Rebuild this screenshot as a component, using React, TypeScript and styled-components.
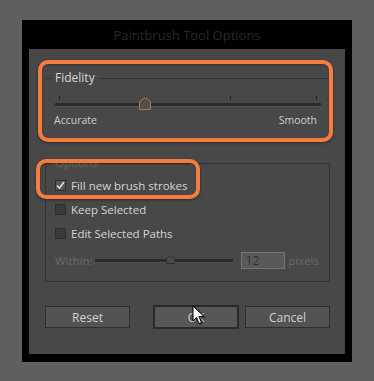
import React from "react";
import styled, { createGlobalStyle } from "styled-components";

const GlobalStyle = createGlobalStyle`
  html, body {
    margin: 0;
    padding: 0;
    background: #5f5f5f;
  }
  body {
    font-family: "Open Sans", "Liberation Sans", sans-serif;
  }
`;

const Page = styled.div`
  width: 374px;
  height: 381px;
  padding: 20px 0 0 22px;
  box-sizing: border-box;
`;

const Dialog = styled.div`
  width: 330px;
  background: #000;
  display: flex;
  flex-direction: column;
  padding-bottom: 8px;
`;

const TitleBar = styled.div`
  height: 29px;
  display: flex;
  align-items: center;
  justify-content: center;
  color: #282828;
  font-size: 13px;
`;

const Panel = styled.div`
  position: relative;
  margin: 0 7px;
  height: 305px;
  box-sizing: border-box;
  background: #484848;
  padding: 21px 15px 0 16px;
  display: flex;
  flex-direction: column;
`;

const Group = styled.fieldset<{ $boxed?: boolean }>`
  margin: 0;
  padding: 0 10px 0 9px;
  border: 1px solid ${(p) => (p.$boxed ? "#343434" : "transparent")};
  border-top-color: #343434;
  min-width: 0;
`;

const Legend = styled.legend<{ $dim?: boolean }>`
  margin-left: -3px;
  padding: 0 3px;
  font-size: ${(p) => (p.$dim ? "11.5px" : "12px")};
  line-height: ${(p) => (p.$dim ? "14px" : "16px")};
  color: ${(p) => (p.$dim ? "#686868" : "#d6d6d6")};
`;

const SliderBox = styled.div<{ $width: number }>`
  position: relative;
  width: ${(p) => p.$width}px;
  height: 14px;
  flex-shrink: 0;
`;

const Ticks = styled.div`
  display: flex;
  justify-content: space-between;
  padding: 0 4px;
  height: 4px;
`;

const Tick = styled.span`
  width: 1px;
  height: 4px;
  background: #232323;
`;

const Track = styled.div<{ $top: number }>`
  margin-top: ${(p) => p.$top}px;
  height: 3px;
  background: #2b2b2b;
  border-bottom: 1px solid #555;
`;

const Thumb = styled.svg`
  position: absolute;
  display: block;
`;

const Scale = styled.div`
  display: flex;
  justify-content: space-between;
  margin: 3px 2px 0 -1px;
  font-size: 10.5px;
  line-height: 14px;
  color: #cfcfcf;
`;

const Spacer = styled.div<{ $h: number }>`
  height: ${(p) => p.$h}px;
  flex-shrink: 0;
`;

const Rows = styled.div`
  padding: 3px 0 8px;
  display: flex;
  flex-direction: column;
`;

const Row = styled.label`
  display: flex;
  align-items: center;
  gap: 5px;
  height: 24px;
  font-size: 11.5px;
  color: #d4d4d4;
`;

const Box = styled.span<{ $checked?: boolean }>`
  width: 11px;
  height: 11px;
  box-sizing: border-box;
  background: ${(p) => (p.$checked ? "#555" : "#3a3a3a")};
  border: 1px solid #2c2c2c;
  display: flex;
  align-items: center;
  justify-content: center;
`;

const WithinRow = styled.div`
  display: flex;
  align-items: center;
  height: 26px;
  margin-top: 2px;
  font-size: 11.5px;
  color: #696969;
`;

const WithinLabel = styled.span`
  width: 41px;
`;

const NumberBox = styled.div`
  width: 46px;
  height: 17px;
  box-sizing: border-box;
  margin: 0 3px 0 8px;
  background: #595959;
  border: 1px solid #747474;
  color: #333;
  font-size: 12px;
  line-height: 15px;
  padding-left: 4px;
`;

const Buttons = styled.div`
  display: flex;
  justify-content: space-between;
  align-items: center;
  margin-top: 23px;
`;

const ButtonGroup = styled.div`
  display: flex;
  align-items: center;
  gap: 6px;
`;

const Button = styled.div<{ $focused?: boolean }>`
  width: ${(p) => (p.$focused ? 86 : 85)}px;
  height: ${(p) => (p.$focused ? 24 : 22)}px;
  box-sizing: border-box;
  display: flex;
  align-items: center;
  justify-content: center;
  background: ${(p) => (p.$focused ? "#575757" : "#535353")};
  border: ${(p) => (p.$focused ? "2px solid #2a2a2a" : "1px solid #2f2f2f")};
  color: #d2d2d2;
  font-size: 12px;
`;

const Highlight = styled.div<{ $l: number; $t: number; $w: number; $h: number }>`
  position: absolute;
  left: ${(p) => p.$l}px;
  top: ${(p) => p.$t}px;
  width: ${(p) => p.$w}px;
  height: ${(p) => p.$h}px;
  box-sizing: border-box;
  border: 4px solid #f67c3d;
  border-radius: 10px;
  box-shadow: 0 1px 3px rgba(0, 0, 0, 0.45), inset 0 1px 2px rgba(0, 0, 0, 0.3);
  pointer-events: none;
`;

const Cursor = styled.svg`
  position: absolute;
  left: 163px;
  top: 256px;
  filter: drop-shadow(1px 1px 1px rgba(0, 0, 0, 0.5));
`;

function Slider({
  width,
  value,
  ticks,
  accent,
}: {
  width: number;
  value: number;
  ticks?: number;
  accent?: boolean;
}) {
  const pos = 4 + (width - 8) * value;
  const tw = accent ? 12 : 9;
  const th = accent ? 13 : 9;
  const shoulder = accent ? 4.5 : 3.5;
  return (
    <SliderBox $width={width}>
      {ticks ? (
        <Ticks>
          {Array.from({ length: ticks }).map((_, i) => (
            <Tick key={i} />
          ))}
        </Ticks>
      ) : null}
      <Track $top={ticks ? 3 : 6} />
      <Thumb
        width={tw}
        height={th}
        viewBox={`0 0 ${tw} ${th}`}
        style={{ left: pos - tw / 2, top: accent ? 1 : 2 }}
      >
        <polygon
          points={`0.5,${shoulder} ${tw / 2},0.5 ${tw - 0.5},${shoulder} ${tw - 0.5},${th - 0.5} 0.5,${th - 0.5}`}
          fill={accent ? "#505050" : "#4a4a4a"}
          stroke={accent ? "#b47a44" : "#2e2e2e"}
          strokeWidth="1"
        />
      </Thumb>
    </SliderBox>
  );
}

function Check({ label, checked }: { label: string; checked?: boolean }) {
  return (
    <Row>
      <Box $checked={checked}>
        {checked && (
          <svg width="9" height="9" viewBox="0 0 9 9">
            <path d="M1 4.5 L3.5 7 L8 1" fill="none" stroke="#e0e0e0" strokeWidth="1.6" />
          </svg>
        )}
      </Box>
      {label}
    </Row>
  );
}

export default function App() {
  return (
    <Page>
      <GlobalStyle />
      <Dialog>
        <TitleBar>Paintbrush Tool Options</TitleBar>
        <Panel>
          <Group>
            <Legend>Fidelity</Legend>
            <Spacer $h={10} />
            <Slider width={266} value={1 / 3} ticks={4} accent />
            <Scale>
              <span>Accurate</span>
              <span>Smooth</span>
            </Scale>
          </Group>
          <Spacer $h={28} />
          <Group $boxed>
            <Legend $dim>Options</Legend>
            <Rows>
              <Check label="Fill new brush strokes" checked />
              <Check label="Keep Selected" />
              <Check label="Edit Selected Paths" />
              <WithinRow>
                <WithinLabel>Within:</WithinLabel>
                <Slider width={138} value={0.55} />
                <NumberBox>12</NumberBox>
                <span>pixels</span>
              </WithinRow>
            </Rows>
          </Group>
          <Buttons>
            <Button>Reset</Button>
            <ButtonGroup>
              <Button $focused>OK</Button>
              <Button>Cancel</Button>
            </ButtonGroup>
          </Buttons>

          <Highlight $l={9} $t={11} $w={295} $h={82} />
          <Highlight $l={7} $t={110} $w={164} $h={40} />
          <Cursor width="13" height="20" viewBox="0 0 13 20">
            <path
              d="M1 1 L1 16 L4.5 12.5 L7 18.5 L9.5 17.5 L7 11.5 L12 11.5 Z"
              fill="#fff"
              stroke="#000"
              strokeWidth="1"
              strokeLinejoin="round"
            />
          </Cursor>
        </Panel>
      </Dialog>
    </Page>
  );
}
